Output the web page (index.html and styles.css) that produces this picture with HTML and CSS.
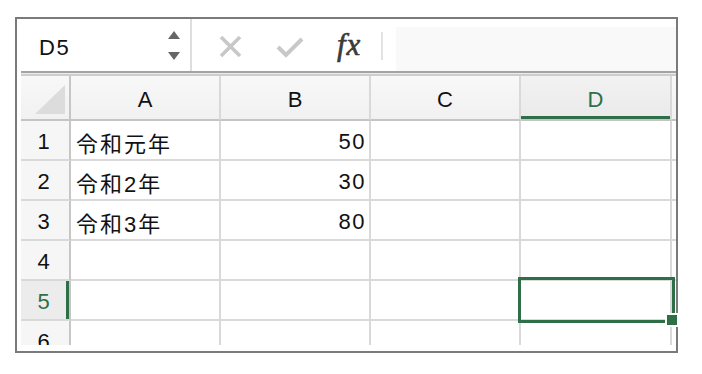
FILE: index.html
```html
<!DOCTYPE html>
<html lang="ja">
<head>
<meta charset="utf-8">
<title>Sheet</title>
<link rel="stylesheet" href="styles.css">
</head>
<body>
<div class="frame">
  <div class="fbar">
    <div class="namebox">
      <span class="ref">D5</span>
      <svg class="spin" width="12" height="29" viewBox="0 0 12 29"><polygon points="0,8 6,0 12,8" fill="#666"/><polygon points="0,21 12,21 6,29" fill="#666"/></svg>
    </div>
    <svg class="ic-x" width="23" height="23" viewBox="0 0 23 23"><path d="M2 2 L21 21 M21 2 L2 21" stroke="#c8c8c8" stroke-width="3.6" fill="none"/></svg>
    <svg class="ic-ok" width="28" height="22" viewBox="0 0 28 22"><polyline points="2,11 10,19 26,3" stroke="#c8c8c8" stroke-width="4" fill="none"/></svg>
    <span class="fx">fx</span>
    <span class="vsep"></span>
    <div class="finput"></div>
  </div>
  <div class="dline"></div>
  <div class="gridwrap">
    <div class="grid">
      <div class="hd corner"><svg width="30" height="29" viewBox="0 0 30 29"><polygon points="0,29 30,29 30,0" fill="#dcdcdc"/></svg></div>
      <div class="hd">A</div>
      <div class="hd">B</div>
      <div class="hd">C</div>
      <div class="hd hd-sel">D</div>
      <div class="hd hd-rest"></div>

      <div class="rh">1</div><div class="c txt">令和元年</div><div class="c num">50</div><div class="c"></div><div class="c"></div><div class="c rest"></div>
      <div class="rh">2</div><div class="c txt">令和2年</div><div class="c num">30</div><div class="c"></div><div class="c"></div><div class="c rest"></div>
      <div class="rh">3</div><div class="c txt">令和3年</div><div class="c num">80</div><div class="c"></div><div class="c"></div><div class="c rest"></div>
      <div class="rh">4</div><div class="c"></div><div class="c"></div><div class="c"></div><div class="c"></div><div class="c rest"></div>
      <div class="rh rh-sel">5</div><div class="c"></div><div class="c"></div><div class="c"></div><div class="c"></div><div class="c rest"></div>
      <div class="rh">6</div><div class="c"></div><div class="c"></div><div class="c"></div><div class="c"></div><div class="c rest"></div>
    </div>
    <div class="sel"></div>
    <div class="handle"></div>
  </div>
</div>
</body>
</html>
```
FILE: styles.css
```css
html, body {
  margin: 0;
  padding: 0;
  background: #fff;
}
body {
  font-family: "Liberation Sans", "Noto Sans CJK JP", sans-serif;
  color: #111;
}
.frame {
  margin: 17px 0 0 15px;
  width: 663px;
  box-sizing: border-box;
  border: 2px solid #7a7a7a;
  padding: 0 0 6px 4px;
  background: #fff;
}
.fbar {
  height: 52px;
  display: flex;
  align-items: center;
  margin-left: -4px;
  padding-left: 4px;
}
.namebox {
  flex: none;
  width: 171px;
  height: 52px;
  box-sizing: border-box;
  border-right: 2px solid #dedede;
  display: flex;
  align-items: center;
  padding-left: 18px;
  padding-right: 10px;
}
.ref {
  font-size: 22px;
  letter-spacing: 1.5px;
  padding-top: 5px;
}
.spin {
  margin-left: auto;
}
.ic-x {
  flex: none;
  margin-left: 27px;
  margin-top: 2px;
}
.ic-ok {
  flex: none;
  margin-left: 34px;
  margin-top: 3px;
}
.fx {
  flex: none;
  display: inline-block;
  width: 31px;
  font-family: "Liberation Serif", serif;
  font-style: italic;
  font-size: 31px;
  color: #3a3a3a;
  -webkit-text-stroke: 0.6px #3a3a3a;
  margin-left: 33px;
  margin-top: 0;
  letter-spacing: 1px;
}
.vsep {
  flex: none;
  width: 2px;
  height: 28px;
  background: #e2e2e2;
  margin-left: 13px;
  margin-top: 2px;
}
.finput {
  flex: 1;
  height: 44px;
  align-self: flex-end;
  margin-left: 13px;
  background: #f9f9f9;
}
.dline {
  height: 5px;
  background: linear-gradient(to bottom, #a3a3a3 0, #a3a3a3 2px, #ececec 2px, #ececec 3px, #cdcdcd 3px, #cdcdcd 5px);
}
.gridwrap {
  position: relative;
}
.grid {
  display: grid;
  grid-template-columns: 50px 150px 150px 150px 151px 1fr;
  grid-template-rows: 45px repeat(6, 40px);
  height: 269px;
  overflow: hidden;
  font-size: 22px;
}
.hd {
  box-sizing: border-box;
  background: linear-gradient(to bottom, #f8f8f8, #f1f1f1);
  border-right: 2px solid #d9d9d9;
  border-bottom: 2px solid #c4c4c4;
  display: flex;
  align-items: center;
  justify-content: center;
  padding-top: 5px;
}
.corner {
  border-right-color: #c6c6c6;
  align-items: flex-end;
  justify-content: flex-end;
  padding: 0 4px 5px 0;
}
.corner svg {
  display: block;
}
.hd-sel {
  background: linear-gradient(to bottom, #f2f2f2, #eaeaea);
  color: #2e6f48;
  box-shadow: inset 0 -3px 0 #2e6f48;
}
.hd-rest {
  border-right: none;
}
.rh {
  box-sizing: border-box;
  background: #f6f6f6;
  border-right: 2px solid #c6c6c6;
  border-bottom: 2px solid #d9d9d9;
  display: flex;
  align-items: center;
  justify-content: center;
  padding: 3px 3px 0 0;
}
.rh-sel {
  background: #ececec;
  color: #2e6f48;
  box-shadow: inset -3px 0 0 #2e6f48;
}
.c {
  box-sizing: border-box;
  border-right: 2px solid #d9d9d9;
  border-bottom: 2px solid #d9d9d9;
  display: flex;
  align-items: center;
  padding-top: 3px;
  white-space: nowrap;
}
.c.rest {
  border-right: none;
}
.txt {
  padding-left: 5px;
  letter-spacing: 2px;
}
.num {
  justify-content: flex-end;
  padding-right: 3px;
  letter-spacing: 1.5px;
}
.sel {
  position: absolute;
  left: 497px;
  top: 201px;
  width: 157px;
  height: 46px;
  box-sizing: border-box;
  border: 3px solid #2e6f48;
}
.handle {
  position: absolute;
  left: 644px;
  top: 237px;
  width: 14px;
  height: 14px;
  box-sizing: border-box;
  background: #2e6f48;
  border: 2px solid #fff;
}
```
